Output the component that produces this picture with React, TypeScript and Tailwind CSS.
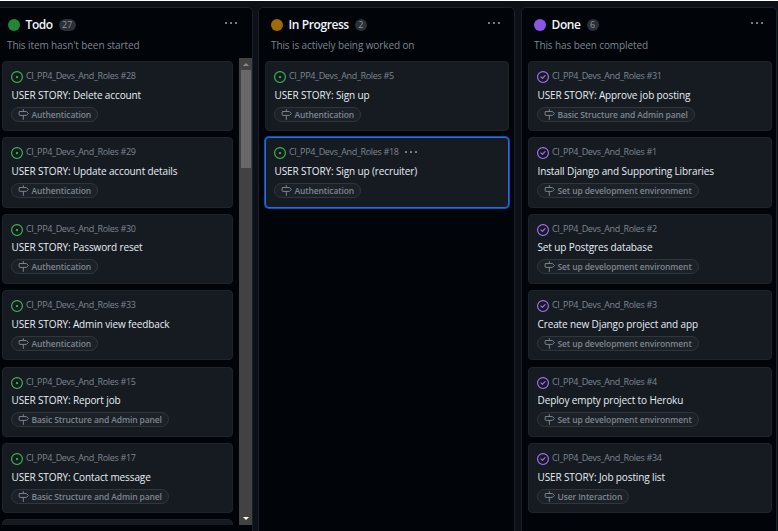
import React from "react";

type Status = "open" | "done";
type Item = { n: number; title: string; label: string; selected?: boolean };

const auth = "Authentication";
const basic = "Basic Structure and Admin panel";
const setup = "Set up development environment";

const todo: Item[] = [
  { n: 28, title: "USER STORY: Delete account", label: auth },
  { n: 29, title: "USER STORY: Update account details", label: auth },
  { n: 30, title: "USER STORY: Password reset", label: auth },
  { n: 33, title: "USER STORY: Admin view feedback", label: auth },
  { n: 15, title: "USER STORY: Report job", label: basic },
  { n: 17, title: "USER STORY: Contact message", label: basic },
];
const progress: Item[] = [
  { n: 5, title: "USER STORY: Sign up", label: auth },
  { n: 18, title: "USER STORY: Sign up (recruiter)", label: auth, selected: true },
];
const done: Item[] = [
  { n: 31, title: "USER STORY: Approve job posting", label: basic },
  { n: 1, title: "Install Django and Supporting Libraries", label: setup },
  { n: 2, title: "Set up Postgres database", label: setup },
  { n: 3, title: "Create new Django project and app", label: setup },
  { n: 4, title: "Deploy empty project to Heroku", label: setup },
  { n: 34, title: "USER STORY: Job posting list", label: "User Interaction" },
];

function StatusIcon({ status }: { status: Status }) {
  return status === "open" ? (
    <svg viewBox="0 0 16 16" className="size-[12px] shrink-0 fill-[#3fb950]">
      <path d="M8 9.5a1.5 1.5 0 100-3 1.5 1.5 0 000 3z" />
      <path fillRule="evenodd" d="M8 0a8 8 0 100 16A8 8 0 008 0zM1.5 8a6.5 6.5 0 1113 0 6.5 6.5 0 01-13 0z" />
    </svg>
  ) : (
    <svg viewBox="0 0 16 16" className="size-[12px] shrink-0 fill-[#a371f7]">
      <path d="M11.28 6.78a.75.75 0 00-1.06-1.06L7.25 8.69 5.78 7.22a.75.75 0 00-1.06 1.06l2 2a.75.75 0 001.06 0l3.5-3.5z" />
      <path fillRule="evenodd" d="M16 8A8 8 0 110 8a8 8 0 0116 0zm-1.5 0a6.5 6.5 0 11-13 0 6.5 6.5 0 0113 0z" />
    </svg>
  );
}

function Milestone() {
  return (
    <svg viewBox="0 0 16 16" className="size-[11px] shrink-0" fill="none" stroke="#7d8590" strokeWidth="1.4" strokeLinecap="round" strokeLinejoin="round">
      <path d="M7.75 .8V3.7M7.75 9.3V15.2M2.7 3.7H12.3L15 6.5L12.3 9.3H2.7Q1.7 9.3 1.7 8.3V4.7Q1.7 3.7 2.7 3.7Z" />
    </svg>
  );
}

function Dots() {
  return (
    <span className="flex gap-[3px]">
      <i className="size-[2px] rounded-[0.5px] bg-[#7d8590]" />
      <i className="size-[2px] rounded-[0.5px] bg-[#7d8590]" />
      <i className="size-[2px] rounded-[0.5px] bg-[#7d8590]" />
    </span>
  );
}

function Card({ item, status }: { item: Item; status: Status }) {
  return (
    <article
      className={`h-[70.3px] shrink-0 rounded-[4px] border bg-[#161b22] pt-[8px] pl-[8px] ${
        item.selected ? "border-[#1f6feb] ring-1 ring-[#1f6feb]/70" : "border-[#1f242b]"
      }`}
    >
      <div className="flex h-3 items-center text-[9px] leading-3 text-[#7d8590]">
        <span className="mt-[2px]"><StatusIcon status={status} /></span>
        <span className="ml-[3px] tracking-[-0.34px]">CI_PP4_Devs_And_Roles #{item.n}</span>
        {item.selected && <span className="ml-[6px]"><Dots /></span>}
      </div>
      <h3 className="mt-[5.6px] ml-[0.5px] text-[10px] leading-[15px] tracking-[-0.12px] text-[#e6edf3]">{item.title}</h3>
      <div className="mt-[4px] flex h-[15px] w-fit items-center rounded-full border border-[#30363d] bg-[#1c2128] px-[6px] text-[8.5px] leading-[13px] font-semibold text-[#7d8590]">
        <Milestone />
        <span className="ml-[2.5px] tracking-[-0.12px]">{item.label}</span>
      </div>
    </article>
  );
}

type HeadProps = { title: string; count: number; text: string; dot: string; menu: string };

function Head({ title, count, text, dot, menu }: HeadProps) {
  return (
    <header className="h-[53px] shrink-0 pt-[9px] pl-[12px]">
      <div className="flex h-4 items-center">
        <i className={`size-3 rounded-full ${dot}`} />
        <h2 className="ml-[5.5px] text-[12px] leading-4 font-semibold tracking-[-0.4px] text-[#f0f6fc]">{title}</h2>
        <span className="ml-[6px] flex h-[12px] min-w-[12px] items-center justify-center rounded-full bg-[#2b3037] px-[3.3px] text-[9px] text-[#8b949e]">{count}</span>
        <span className={`mt-[-4px] ml-auto ${menu}`}><Dots /></span>
      </div>
      <p className="mt-[5px] text-[10px] leading-[14px] tracking-[-0.1px] text-[#7d8590]">{text}</p>
    </header>
  );
}

export default function App() {
  return (
    <main className="flex h-[531px] w-[778px] flex-col overflow-hidden border-t border-white bg-[#0d1117] font-['Open_Sans','Noto_Sans',sans-serif]">
      <div className="mt-[6px] flex min-h-0 flex-1">
        <section className="-ml-[5px] flex w-[258px] shrink-0 flex-col rounded-tr-[5px] border-t border-r border-[#1b2027] bg-[#010409]">
          <Head title="Todo" count={27} text="This item hasn't been started" dot="bg-[#238636] ml-[1px]" menu="mr-[15px]" />
          <div className="-mt-[3px] flex h-[467px] overflow-hidden">
            <div className="ml-[7px] flex w-[231px] shrink-0 flex-col gap-[6.1px] pt-[3px]">
              {todo.map((item) => <Card key={item.n} item={item} status="open" />)}
              <div className="h-5 shrink-0 rounded-t-[5px] border border-[#1f242b] bg-[#161b22]" />
            </div>
            <div className="ml-auto flex w-[13px] flex-col items-center bg-[#424242]">
              <i className="mt-[5px] border-x-[3px] border-b-[3px] border-x-transparent border-b-[#8b8b8b]" />
              <i className="mt-[4px] h-[98px] w-[10px] bg-[#686868]" />
              <i className="mt-auto mb-[5px] border-x-[3px] border-t-[3px] border-x-transparent border-t-white" />
            </div>
          </div>
        </section>
        <section className="ml-[5px] flex w-[257px] shrink-0 flex-col rounded-t-[5px] border border-b-0 border-[#1b2027] bg-[#010409]">
          <Head title="In Progress" count={2} text="This is actively being worked on" dot="bg-[#9e6a03]" menu="mr-[14px]" />
          <div className="flex flex-col gap-[6.1px] pr-[5px] pl-[6px]">
            {progress.map((item) => <Card key={item.n} item={item} status="open" />)}
          </div>
        </section>
        <section className="ml-[6px] flex w-[256px] shrink-0 flex-col rounded-t-[5px] border border-b-0 border-[#1b2027] bg-[#010409]">
          <Head title="Done" count={6} text="This has been completed" dot="bg-[#8957e5]" menu="mr-[13px]" />
          <div className="flex flex-col gap-[6.1px] pr-[4px] pl-[6px]">
            {done.map((item) => <Card key={item.n} item={item} status="done" />)}
          </div>
        </section>
      </div>
    </main>
  );
}
